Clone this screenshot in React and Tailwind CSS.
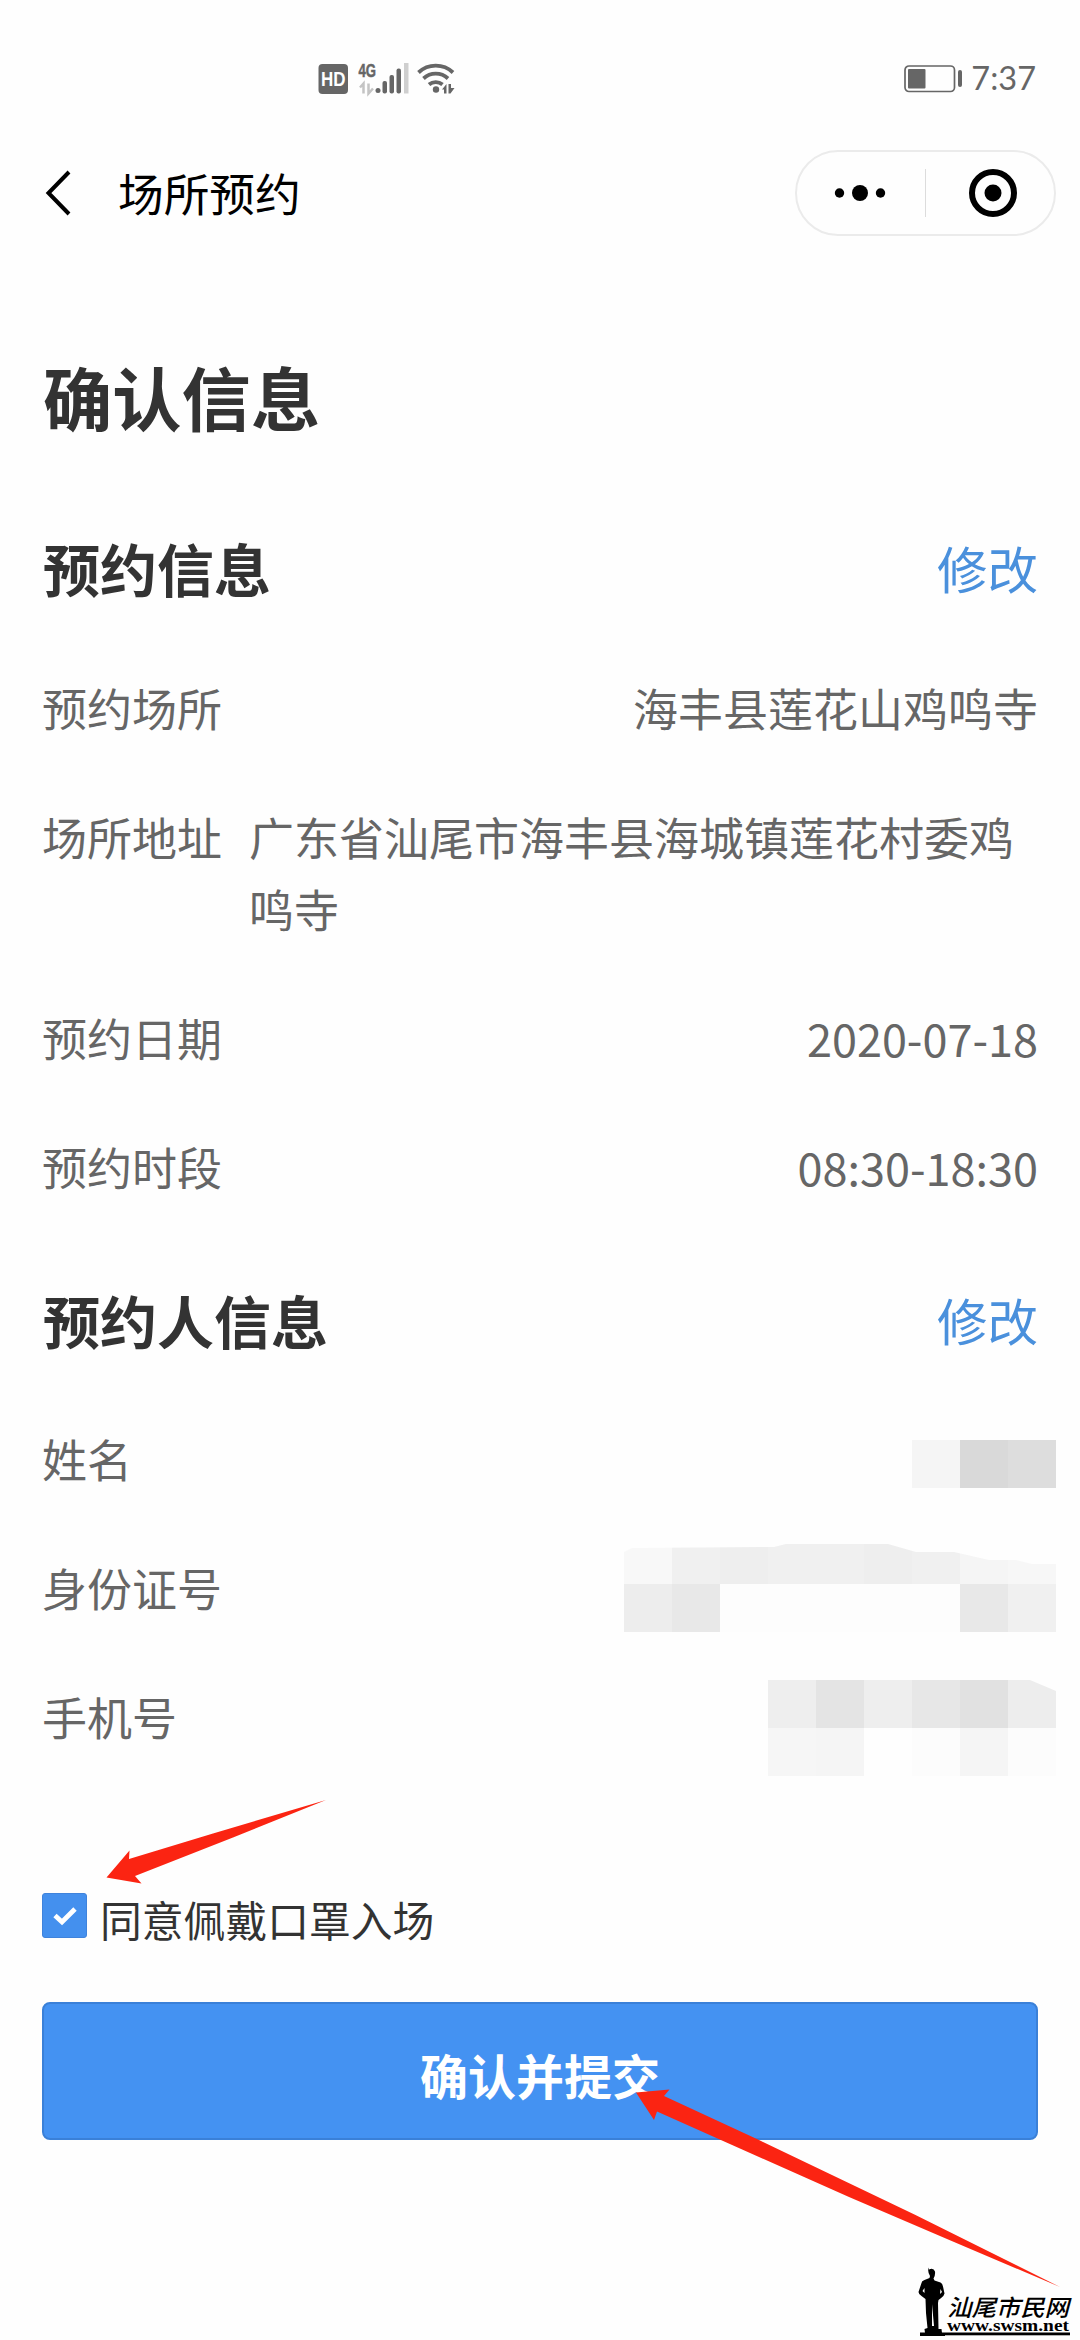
// Venue booking confirmation screen: booking info, visitor info, consent and submit.
import React, { useState } from "react";

const booking = [
  { label: "预约场所", value: "海丰县莲花山鸡鸣寺" },
  { label: "场所地址", value: "广东省汕尾市海丰县海城镇莲花村委鸡鸣寺", long: true },
  { label: "预约日期", value: "2020-07-18" },
  { label: "预约时段", value: "08:30-18:30" },
];

// Grey levels of the masked blocks, row by row
const maskedName = [["#f5f5f5", "#d9d9d9", "#dddddd"]];
const maskedId = [
  ["#f8f8f8", "#f0f0f0", "#eeeeee", "#f0f0f0", "#f0f0f0", "#eeeeee", "#f0f0f0", "#f5f5f5", "#f7f7f7"],
  ["#ededed", "#e8e8e8", "#fdfdfd", "#fdfdfd", "#fdfdfd", "#fdfdfd", "#fdfdfd", "#e8e8e8", "#f0f0f0"],
];
const maskedPhone = [
  ["#eeeeee", "#e4e4e4", "#eeeeee", "#e7e7e7", "#e1e1e1", "#ededed"],
  ["#f6f6f6", "#f5f5f5", "#fefefe", "#fcfcfc", "#f5f5f5", "#fcfcfc"],
];

const Mosaic = ({ rows, className }) => (
  <div className={`-mr-[18px] ${className}`}>
    {rows.map((row, i) => (
      <div key={i} className="flex">
        {row.map((color, j) => (
          <div key={j} className="size-12" style={{ backgroundColor: color }} />
        ))}
      </div>
    ))}
  </div>
);

const StatusBar = () => (
  <div className="flex h-[150px] items-start justify-between pt-[60px] pr-[44px] pl-[318px] text-[#666]">
    <svg width="140" height="40" viewBox="0 0 140 40" fill="currentColor">
      <rect x="0.5" y="4" width="29.5" height="30" rx="4" />
      <text x="3" y="26" fontSize="19.500" fontWeight="700" fill="#fff" textLength="24.500" lengthAdjust="spacingAndGlyphs" className="font-['Liberation_Sans',sans-serif]">HD</text>
      <text x="40.5" y="16.500" fontSize="19" fontWeight="700" stroke="currentColor" strokeWidth="0.500" textLength="17.500" lengthAdjust="spacingAndGlyphs" className="font-['Liberation_Sans',sans-serif]">4G</text>
      <path d="M42 27.500l3.500-4v10M50.500 23.500v10l4.500-5" fill="none" stroke="#c4c4c4" strokeWidth="2.500" />
      <circle cx="60" cy="30.500" r="2.500" />
      <rect x="64.500" y="21" width="4.500" height="12.500" rx="2" />
      <rect x="71.500" y="15" width="4.500" height="18.500" rx="2" />
      <rect x="78.500" y="8.500" width="4.500" height="25" rx="2" />
      <rect x="86" y="3" width="4.500" height="30.500" fill="#cfcfcf" />
      <g fill="none" stroke="currentColor" strokeWidth="3.800">
        <path d="M100.500 12.500a25 25 0 0 1 34.500 0" />
        <path d="M105.500 18.500a18 18 0 0 1 24.500 0" />
        <path d="M111 24.500a10.500 10.500 0 0 1 13.500 0" />
      </g>
      <circle cx="118" cy="29.500" r="3.200" />
      <path d="M124 29.500l4.500-5.500v9.500H126v-4zM130.500 24h2.500v4h3.500l-4 5.500h-2z" />
    </svg>
    <div className="flex items-center">
      <svg width="60" height="36" viewBox="0 0 60 36" fill="currentColor">
        <rect x="1" y="6" width="49.500" height="25.500" rx="4" fill="none" stroke="currentColor" strokeWidth="1.700" />
        <rect x="4" y="9" width="17.500" height="19.500" rx="1" />
        <rect x="54" y="10" width="4" height="17" rx="2" />
      </svg>
      <span className="ml-[7px] font-['Lato',sans-serif] text-[32.500px] leading-9">7:37</span>
    </div>
  </div>
);

const NavBar = () => (
  <div className="flex h-[86px] items-center pr-[24px] pl-[42px]">
    <svg width="32" height="48" viewBox="0 0 32 48" fill="none" stroke="#000" strokeWidth="4">
      <path d="M27 3 6.500 24 27 45" />
    </svg>
    <span className="ml-[44px] pb-[3px] text-[45.700px] leading-[60px] text-black">场所预约</span>
    <div className="ml-auto flex h-[86px] w-[261px] items-center rounded-full border-2 border-[#ebebeb]">
      <svg width="128" height="48" viewBox="0 0 128 48">
        <circle cx="42.500" cy="24" r="4.700" />
        <circle cx="63" cy="24" r="8" />
        <circle cx="83.500" cy="24" r="4.700" />
      </svg>
      <div className="h-12 w-px bg-[#dcdcdc]" />
      <svg width="128" height="50" viewBox="0 0 128 50">
        <circle cx="67" cy="25" r="21" fill="none" stroke="#000" strokeWidth="6" />
        <circle cx="67" cy="25" r="8.500" />
      </svg>
    </div>
  </div>
);

const SectionHeading = ({ title }) => (
  <div className="flex h-[80px] items-center justify-between">
    <h2 className="ml-px text-[57px] leading-[80px] font-bold text-[#333]">{title}</h2>
    <button className="text-[50.500px] leading-[80px] text-[#4a90dc]">修改</button>
  </div>
);

const Row = ({ label, children, long }) => (
  <div className={long ? "flex gap-[27px]" : "flex justify-between"}>
    <span className="h-[72px] shrink-0">{label}</span>
    {children}
  </div>
);

// Small statue beside the site name
const SiteMark = () => (
  <svg className="absolute top-[2265px] left-[915px]" width="160" height="72" viewBox="0 0 160 72">
    <path d="M14 4.500q4.500-2 6 2 .500 4-1.500 7l1 2 6 2q2 1 2.500 4l1.500 7q-.500 3-4 5l-2 1.500-.500 3 .500 26h3l.500 4h3v3H5v-3h5l-.500-4 3-1-1.500-15-.500-14-4-3q-3-2-3-4l3-9q0-2 3-3l5-2 .500-2q-3-5-1-8.500z" />
    <path d="M7.500 26l2-3v5zM25.500 24l1.500 3-2 2z" fill="#fff" />
    <path d="M17 39l2 22h-2z" fill="#fff" />
    <rect x="5" y="67.500" width="150" height="2.800" />
    <text x="32" y="50.500" fontSize="23" fontWeight="500" fontStyle="italic" textLength="122" lengthAdjust="spacingAndGlyphs" className="font-['Liberation_Serif','Noto_Sans_CJK_SC',serif]">汕尾市民网</text>
    <text x="32" y="65.500" fontSize="17" fontWeight="700" textLength="122" lengthAdjust="spacingAndGlyphs" className="font-['Liberation_Serif',serif]">www.swsm.net</text>
  </svg>
);

const App = () => {
  const [agreed, setAgreed] = useState(true);

  return (
    <main className="relative h-[2340px] w-[1080px] overflow-hidden bg-[#fefefe] font-['Noto_Sans_CJK_SC',sans-serif]">
      <StatusBar />
      <NavBar />

      <div className="px-[42px] pt-[110px]">
        <h1 className="ml-px text-[69.300px] leading-[100px] font-bold text-[#333]">确认信息</h1>

        <section className="mt-[81px]">
          <SectionHeading title="预约信息" />
          <div className="mt-[65px] flex flex-col gap-[57px] text-[45px] leading-[72px] text-[#666]">
            {booking.map((item) => (
              <Row key={item.label} label={item.label} long={item.long}>
                <span>{item.value}</span>
              </Row>
            ))}
          </div>
        </section>

        <section className="mt-[76px]">
          <SectionHeading title="预约人信息" />
          <div className="mt-[64px] flex flex-col gap-[57px] text-[45px] leading-[72px] text-[#666]">
            <Row label="姓名">
              <Mosaic rows={maskedName} className="mt-[17px] -mb-4" />
            </Row>
            <Row label="身份证号">
              <Mosaic
                rows={maskedId}
                className="-mt-[16px] -mb-[8px] [clip-path:polygon(0_16px,8px_12px,150px_11px,162px_8px,264px_8px,292px_16px,330px_16px,365px_24px,392px_24px,408px_28px,432px_28px,432px_96px,0_96px)]"
              />
            </Row>
            <Row label="手机号">
              <Mosaic
                rows={maskedPhone}
                className="-mt-[1px] -mb-[23px] [clip-path:polygon(0_0,262px_0,288px_11px,288px_96px,0_96px)]"
              />
            </Row>
          </div>
        </section>

        <label className="mt-[140px] flex h-[45px] items-center">
          <input type="checkbox" className="sr-only" checked={agreed} onChange={() => setAgreed(!agreed)} />
          <span className="flex size-[45px] items-center justify-center rounded-[3px] border border-[#3f83dc] bg-[#4490ee]">
            {agreed && (
              <svg width="30" height="24" viewBox="0 0 30 24" fill="none" stroke="#fff" strokeWidth="4.800">
                <path d="M5 11.500 12 18 25 5" />
              </svg>
            )}
          </span>
          <span className="ml-[13px] pt-[7px] text-[41.800px] leading-[60px] text-[#333]">同意佩戴口罩入场</span>
        </label>

        <button className="mt-[64px] flex h-[138px] w-full items-center justify-center rounded-[8px] border-2 border-[#3a80d8] bg-[#4492f2] pt-[5px] text-[48px] font-bold text-white">
          确认并提交
        </button>
      </div>

      {/* pointers to the consent box and the submit button */}
      <svg className="pointer-events-none absolute inset-0" width="1080" height="2340" fill="#fb2412">
        <path d="M106.500 1877.500 129.500 1850.500 129 1859 213 1833.500 326 1800 233 1837.500 135 1876 141.500 1883.500Z" />
        <path d="M636 2092.500 669.500 2089.500 664 2096 759 2140 915.500 2215 1060 2287 947 2239 849 2197 759 2157 657 2111.500 654 2120Z" />
      </svg>
      <SiteMark />
    </main>
  );
};

export default App;
